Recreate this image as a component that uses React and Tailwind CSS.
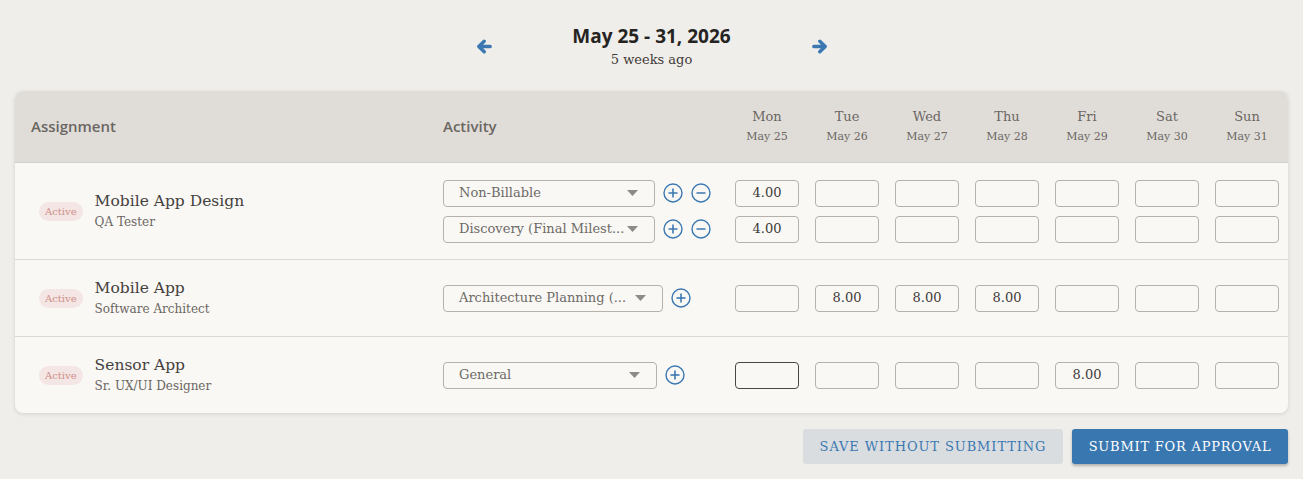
const serif = { fontFamily: '"DejaVu Serif", serif' };
const sans = { fontFamily: '"Open Sans", sans-serif' };

const DAYS = [
  ['Mon', 'May 25'],
  ['Tue', 'May 26'],
  ['Wed', 'May 27'],
  ['Thu', 'May 28'],
  ['Fri', 'May 29'],
  ['Sat', 'May 30'],
  ['Sun', 'May 31'],
];

const ROWS = [
  {
    name: 'Mobile App Design',
    role: 'QA Tester',
    lines: [
      { activity: 'Non-Billable', w: 'w-[212px]', remove: true, hours: ['4.00', '', '', '', '', '', ''] },
      { activity: 'Discovery (Final Milest...', w: 'w-[212px]', remove: true, hours: ['4.00', '', '', '', '', '', ''] },
    ],
  },
  {
    name: 'Mobile App',
    role: 'Software Architect',
    lines: [
      { activity: 'Architecture Planning (...', w: 'w-[220px]', hours: ['', '8.00', '8.00', '8.00', '', '', ''] },
    ],
  },
  {
    name: 'Sensor App',
    role: 'Sr. UX/UI Designer',
    lines: [
      { activity: 'General', w: 'w-[214px]', focus: 0, hours: ['', '', '', '', '8.00', '', ''] },
    ],
  },
];

function Arrow({ right }) {
  return (
    <svg width="16" height="15" viewBox="0 0 16 15" className={right ? 'rotate-180' : ''}>
      <path
        d="M14.2 7.5H3.2M8.2 2.2L2.8 7.5L8.2 12.8"
        fill="none"
        stroke="#3b78b2"
        strokeWidth="3.4"
        strokeLinecap="round"
        strokeLinejoin="round"
      />
    </svg>
  );
}

function CircleIcon({ minus }) {
  return (
    <svg width="20" height="20" viewBox="0 0 20 20" fill="none" stroke="#3b78b2" strokeWidth="1.4">
      <circle cx="10" cy="10" r="9" />
      <path d="M5.5 10h9" strokeWidth="1.6" />
      {!minus && <path d="M10 5.5v9" strokeWidth="1.6" />}
    </svg>
  );
}

function Line({ line }) {
  return (
    <div className="flex items-center h-[27px]">
      <div className="w-[284px] flex items-center gap-2">
        <div className={`${line.w} h-[27px] border border-[#b5b2ae] rounded-[4px] flex items-center justify-between pl-[15px] pr-[16px] text-[13px] text-[#6e6a66]`}>
          <span className="truncate">{line.activity}</span>
          <svg width="11" height="6" viewBox="0 0 11 6"><path d="M0 0h11L5.5 6z" fill="#8e8a86" /></svg>
        </div>
        <CircleIcon />
        {line.remove && <CircleIcon minus />}
      </div>
      <div className="flex">
        {line.hours.map((h, i) => (
          <div key={i} className="w-[80px] flex justify-center">
            <div
              className={`w-[64px] h-[27px] rounded-[4px] border flex items-center justify-center text-[13px] text-[#3f3b38] ${
                line.focus === i ? 'border-[#4a4643]' : 'border-[#b5b2ae]'
              }`}
            >
              {h}
            </div>
          </div>
        ))}
      </div>
    </div>
  );
}

export default function App() {
  return (
    <div className="min-h-[479px] bg-[#efeeea] px-[15px] pt-[23px] pb-[15px]" style={serif}>
      <div className="flex items-center justify-center">
        <Arrow />
        <div className="w-[320px] text-center">
          <div className="text-[19px] font-bold text-[#262423] leading-[26px]" style={sans}>
            May 25 - 31, 2026
          </div>
          <div className="text-[13px] text-[#3f3b38] leading-[21px]">5 weeks ago</div>
        </div>
        <Arrow right />
      </div>

      <div className="mt-[21px] rounded-[8px] bg-[#f9f8f5] shadow-[0_1px_4px_rgba(0,0,0,0.12)] overflow-hidden">
        <div className="h-[72px] bg-[#e0ddd9] border-b border-[#d2cfcb] flex items-center">
          <div className="w-[428px] pl-[16px] text-[15px] font-semibold text-[#6b6662]" style={sans}>
            Assignment
          </div>
          <div className="w-[284px] text-[15px] font-semibold text-[#6b6662]" style={sans}>
            Activity
          </div>
          <div className="flex">
            {DAYS.map(([d, m]) => (
              <div key={d} className="w-[80px] text-center text-[#6b6662]">
                <div className="text-[13px] leading-[20px]">{d}</div>
                <div className="text-[11px] leading-[20px]">{m}</div>
              </div>
            ))}
          </div>
        </div>

        {ROWS.map((row, idx) => (
          <div
            key={row.name}
            className={`flex items-center ${idx > 0 ? 'border-t border-[#dcd9d5] h-[77px]' : 'h-[96px]'}`}
          >
            <div className="w-[428px] pl-[24px] flex items-center gap-[12px]">
              <span className="rounded-full bg-[#f4e6e4] text-[#cf8f8a] text-[10px] px-[6px] py-[3px] leading-[13px]">Active</span>
              <div>
                <div className="text-[15.5px] text-[#45413e] leading-[21px]">{row.name}</div>
                <div className="text-[12px] text-[#6b6662] leading-[20px]">{row.role}</div>
              </div>
            </div>
            <div className="flex flex-col gap-[9px]">
              {row.lines.map((l, i) => (
                <Line key={i} line={l} />
              ))}
            </div>
          </div>
        ))}
      </div>

      <div className="flex justify-end gap-[9px] mt-[16px]">
        <button className="h-[35px] w-[260px] rounded-[3px] bg-[#d9dde0] text-[#3b78b2] text-[13px] uppercase tracking-[0.07em]">
          Save without submitting
        </button>
        <button className="h-[35px] w-[216px] rounded-[3px] bg-[#3977b1] text-white text-[13px] uppercase tracking-[0.06em] shadow-[0_2px_3px_rgba(0,0,0,0.25)]">
          Submit for approval
        </button>
      </div>
    </div>
  );
}
